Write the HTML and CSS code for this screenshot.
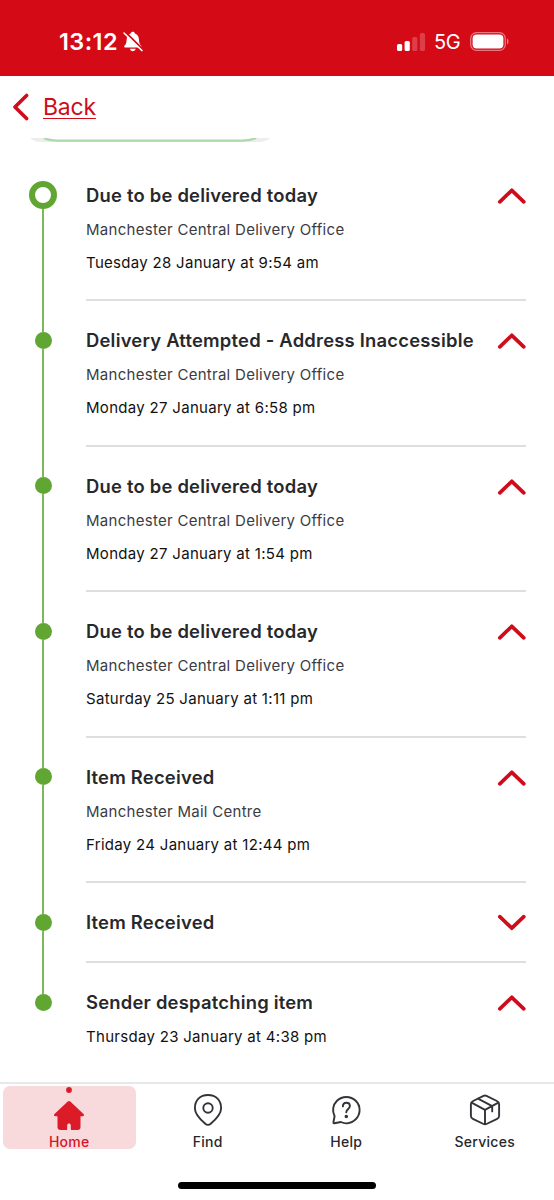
FILE: index.html
```html
<!DOCTYPE html>
<html lang="en">
<head>
  <meta charset="UTF-8">
  <meta name="viewport" content="width=device-width, initial-scale=1.0">
  <title>Track your item</title>
  <link rel="stylesheet" href="styles.css">
</head>
<body>
  <header class="status-bar">
    <span class="clock">13:12</span>
    <svg class="bell" width="20" height="22" viewBox="0 0 20 22">
      <path d="M2 16.4c-.9 0-1.1-.9-.5-1.6C3.600 12.600 3.400 10.500 3.800 7.500 4.200 4.700 5.600 3.200 7.600 2.600 8 1.400 8.800.8 9.800.8s1.800.6 2.200 1.800c2 .6 3.400 2.100 3.800 4.900.4 3 .2 5.100 2.300 7.300.6.7.4 1.600-.5 1.600zM6.900 17.800h5.800c-.3 1.600-1.400 2.500-2.900 2.500s-2.600-.9-2.900-2.500z" fill="#fff"/>
      <path d="M2.500 1.200l17 17" stroke="#d40a17" stroke-width="2"/>
      <path d="M1 2l18 17.600" stroke="#fff" stroke-width="1.500" stroke-linecap="round"/>
    </svg>
    <svg class="signal" width="28" height="18" viewBox="0 0 28 18" fill="#fff">
      <rect x="0" y="11" width="5.200" height="7" rx="1.500"/>
      <rect x="7.600" y="8" width="5.200" height="10" rx="1.500"/>
      <rect x="15.200" y="4" width="5.200" height="14" rx="1.500" opacity=".22"/>
      <rect x="22.800" y="0" width="5.200" height="18" rx="1.500" opacity=".22"/>
    </svg>
    <span class="network">5G</span>
    <svg class="battery" width="39" height="19" viewBox="0 0 39 19">
      <rect x=".7" y=".7" width="34.600" height="17.600" rx="5.800" fill="none" stroke="#fff" stroke-opacity=".45" stroke-width="1.300"/>
      <rect x="2.600" y="2.600" width="30.800" height="13.800" rx="4" fill="#fff"/>
      <path d="M37 6.500c2 1 2 5 0 6z" fill="#fff" opacity=".5"/>
    </svg>
  </header>

  <div class="back-bar">
    <svg width="18" height="28" viewBox="0 0 18 28"><path d="M15.600 2.400L4 14l11.600 11.600" fill="none" stroke="#cf0c1b" stroke-width="3.600" stroke-linecap="round" stroke-linejoin="round"/></svg>
    <a class="back-link" href="#">Back</a>
  </div>

  <!-- bottom edge of the card scrolled under the header -->
  <div class="card-edge">
    <svg width="240" height="6" viewBox="0 0 240 6">
      <path d="M0 0h240c-3 3-7 4-13 4H13C7 4 3 3 0 0z" fill="#ededed"/>
      <path d="M14 0h212c-4 2-8 3-13 3H27c-5 0-9-1-13-3z" fill="#fff"/>
      <path d="M14 0c4 2 8 2.600 13 2.600h186c5 0 9-.6 13-2.600" fill="none" stroke="#acd8ac" stroke-width="2.400"/>
    </svg>
  </div>

  <ul class="timeline">
    <li class="event">
      <div class="rail"><span class="ring"></span><span class="line"></span></div>
      <div class="details">
        <div class="heading"><h2>Due to be delivered today</h2><svg class="chevron" width="30" height="17" viewBox="0 0 30 17"><path d="M2.800 14.800L14.800 3.300l12 11.500"/></svg></div>
        <p class="place">Manchester Central Delivery Office</p>
        <p class="date">Tuesday 28 January at 9:54 am</p>
      </div>
    </li>
    <li class="event">
      <div class="rail"><span class="lead"></span><span class="dot"></span><span class="line"></span></div>
      <div class="details">
        <div class="heading"><h2>Delivery Attempted - Address Inaccessible</h2><svg class="chevron" width="30" height="17" viewBox="0 0 30 17"><path d="M2.800 14.800L14.800 3.300l12 11.500"/></svg></div>
        <p class="place">Manchester Central Delivery Office</p>
        <p class="date">Monday 27 January at 6:58 pm</p>
      </div>
    </li>
    <li class="event">
      <div class="rail"><span class="lead"></span><span class="dot"></span><span class="line"></span></div>
      <div class="details">
        <div class="heading"><h2>Due to be delivered today</h2><svg class="chevron" width="30" height="17" viewBox="0 0 30 17"><path d="M2.800 14.800L14.800 3.300l12 11.500"/></svg></div>
        <p class="place">Manchester Central Delivery Office</p>
        <p class="date">Monday 27 January at 1:54 pm</p>
      </div>
    </li>
    <li class="event">
      <div class="rail"><span class="lead"></span><span class="dot"></span><span class="line"></span></div>
      <div class="details">
        <div class="heading"><h2>Due to be delivered today</h2><svg class="chevron" width="30" height="17" viewBox="0 0 30 17"><path d="M2.800 14.800L14.800 3.300l12 11.500"/></svg></div>
        <p class="place">Manchester Central Delivery Office</p>
        <p class="date">Saturday 25 January at 1:11 pm</p>
      </div>
    </li>
    <li class="event">
      <div class="rail"><span class="lead"></span><span class="dot"></span><span class="line"></span></div>
      <div class="details">
        <div class="heading"><h2>Item Received</h2><svg class="chevron" width="30" height="17" viewBox="0 0 30 17"><path d="M2.800 14.800L14.800 3.300l12 11.500"/></svg></div>
        <p class="place">Manchester Mail Centre</p>
        <p class="date">Friday 24 January at 12:44 pm</p>
      </div>
    </li>
    <li class="event collapsed">
      <div class="rail"><span class="lead"></span><span class="dot"></span><span class="line"></span></div>
      <div class="details">
        <div class="heading"><h2>Item Received</h2><svg class="chevron" width="30" height="17" viewBox="0 0 30 17"><path d="M2.800 2.700L14.800 14.200l12-11.500"/></svg></div>
      </div>
    </li>
    <li class="event last">
      <div class="rail"><span class="lead"></span><span class="dot"></span></div>
      <div class="details">
        <div class="heading"><h2>Sender despatching item</h2><svg class="chevron" width="30" height="17" viewBox="0 0 30 17"><path d="M2.800 14.800L14.800 3.300l12 11.500"/></svg></div>
        <p class="date">Thursday 23 January at 4:38 pm</p>
      </div>
    </li>
  </ul>

  <nav class="tab-bar">
    <a class="tab active" href="#">
      <svg width="32" height="47" viewBox="0 0 32 47" fill="#dc1b28">
        <circle cx="16" cy="4" r="2.900"/>
        <path d="M14.700 15.600c.8-.7 1.800-.7 2.600 0L30.500 28c1 1 .5 2.300-1 2.300h-2V41c0 2-1 3-3 3H19c-.8 0-1.200-.4-1.200-1.200v-3.600c0-2.400-3.600-2.400-3.600 0v3.600c0 .8-.4 1.200-1.200 1.200H7.500c-2 0-3-1-3-3V30.300h-2c-1.500 0-2-1.300-1-2.300z"/>
      </svg>
      <span>Home</span>
    </a>
    <a class="tab" href="#">
      <svg width="32" height="47" viewBox="0 0 32 47" fill="none" stroke="#333438" stroke-width="1.900">
        <path d="M16 38.900c-1 0-1.800-.4-2.700-1.200C8 33.200 2.900 28 2.900 22.200 2.900 14.200 8 9 16 9s13.100 5.200 13.100 13.200c0 5.800-5.100 11-10.400 15.500-.9.8-1.700 1.200-2.700 1.200z"/>
        <circle cx="16" cy="22" r="4.700"/>
      </svg>
      <span>Find</span>
    </a>
    <a class="tab" href="#">
      <svg width="32" height="47" viewBox="0 0 32 47" fill="none" stroke="#333438" stroke-width="1.900" stroke-linecap="round" stroke-linejoin="round">
        <path d="M4.600 30.300C1.900 25.200 2.800 18.900 7 14.800c5.200-5.100 13.500-5.100 18.700 0s5.200 13.400 0 18.500c-4 4-9.900 4.900-14.800 2.700l-6.500 1.200c-.8.100-1.200-.3-1-1z"/>
        <path d="M12.900 20.400c0-2.200 1.400-3.700 3.500-3.700s3.500 1.400 3.500 3.300c0 2.900-3.600 3-3.600 6.200"/>
        <circle cx="16.300" cy="30.500" r=".8" fill="#333438"/>
      </svg>
      <span>Help</span>
    </a>
    <a class="tab" href="#">
      <svg width="32" height="47" viewBox="0 0 32 47" fill="none" stroke="#333438" stroke-width="1.900" stroke-linecap="round" stroke-linejoin="round">
        <path d="M14.500 9.900c1-.5 2-.5 3 0l10.400 5.100c1.600.8 2.200 1.700 2.200 3.300v11.400c0 1.500-.6 2.500-2 3.200l-10.600 5.100c-1 .5-2 .5-3 0L3.900 32.900c-1.400-.7-2-1.700-2-3.200V18.300c0-1.600.6-2.500 2.200-3.300z"/>
        <path d="M2.600 16.700L16 23.900l13.400-7.200M16 23.900v14.100M9 12.700l14.200 7.500v5.200"/>
      </svg>
      <span>Services</span>
    </a>
  </nav>
  <div class="home-indicator"></div>
</body>
</html>
```

FILE: styles.css
```css
/* Global Styles */
* {
  box-sizing: border-box;
}

body {
  font-family: Inter, "Liberation Sans", sans-serif;
  margin: 0;
  height: 1200px;
  background-color: #fff;
  color: #27282c;
  display: flex;
  flex-direction: column;
  overflow: hidden;
}

h2, p, ul {
  margin: 0;
  padding: 0;
}

svg {
  display: block;
  flex: none;
}

/* Status bar */
.status-bar {
  flex: none;
  height: 76px;
  padding: 7px 45px 0 59px;
  background-color: #d40a17;
  color: #fff;
  display: flex;
  align-items: center;
}

.clock {
  width: 59px;
  font-size: 23.5px;
  font-weight: 600;
  letter-spacing: 0.4px;
}

.bell {
  margin-left: 5px;
}

.signal {
  margin-left: auto;
}

.network {
  margin-left: 9px;
  width: 27px;
  font-size: 20px;
  letter-spacing: -0.3px;
}

.battery {
  margin-left: 9px;
  margin-top: -1px;
}

/* Back link */
.back-bar {
  flex: none;
  height: 61px;
  padding-left: 11px;
  display: flex;
  align-items: center;
}

.back-link {
  margin-left: 14px;
  font-size: 23px;
  letter-spacing: -0.2px;
  color: #cf0c1b;
  text-decoration: underline;
  text-decoration-thickness: 1px;
  text-underline-offset: 3px;
}

.card-edge {
  flex: none;
  height: 42.8px;
  padding: 1px 0 0 30px;
}

/* Timeline */
.timeline {
  list-style: none;
  flex: 1;
  min-height: 0;
}

.event {
  display: flex;
  height: 145.5px;
}

.event.collapsed {
  height: 79.8px;
}

.rail {
  width: 86px;
  display: flex;
  flex-direction: column;
  align-items: center;
}

.ring {
  width: 28px;
  height: 28px;
  margin-top: 1px;
  border: 6px solid #61a632;
  border-radius: 50%;
}

.dot {
  width: 17px;
  height: 17px;
  border-radius: 50%;
  background-color: #61a632;
}

.lead,
.line {
  width: 2px;
  background-color: #7fb65c;
}

.lead {
  height: 6.5px;
}

.line {
  flex: 1;
}

.details {
  width: 440px;
  height: 121.5px;
  border-bottom: 2px solid #dfdfdf;
}

.collapsed .details {
  height: 56px;
}

.last .details {
  border-bottom: none;
}

.heading {
  height: 30px;
  margin-bottom: 3px;
  display: flex;
  align-items: center;
  justify-content: space-between;
}

.heading h2 {
  font-size: 18.4px;
  font-weight: 600;
  line-height: 30px;
  letter-spacing: 0.22px;
  white-space: nowrap;
}

.chevron {
  margin-right: -1px;
  margin-top: 1px;
}

.chevron path {
  fill: none;
  stroke: #cf0c1b;
  stroke-width: 3.7;
  stroke-linecap: round;
  stroke-linejoin: round;
}

.place,
.date {
  font-size: 15px;
  line-height: 33px;
  letter-spacing: 0.28px;
}

.place {
  color: #3b3c42;
}

.date {
  color: #111;
  letter-spacing: 0.3px;
}

/* Tab bar */
.tab-bar {
  flex: none;
  height: 100px;
  padding-top: 2px;
  border-top: 2px solid #e7e8e8;
  display: grid;
  grid-template-columns: repeat(4, 1fr);
}

.tab {
  height: 63px;
  margin: 0 3px;
  border-radius: 7px;
  display: flex;
  flex-direction: column;
  align-items: center;
  font-size: 14px;
  font-weight: 500;
  line-height: 17px;
  letter-spacing: 0.3px;
  color: #27282c;
  text-decoration: none;
}

.tab.active {
  background-color: #f8d9dc;
  color: #d5152b;
}

.home-indicator {
  flex: none;
  width: 198px;
  height: 7px;
  margin: 0 auto 11px;
  border-radius: 4px;
  background-color: #000;
}
```
